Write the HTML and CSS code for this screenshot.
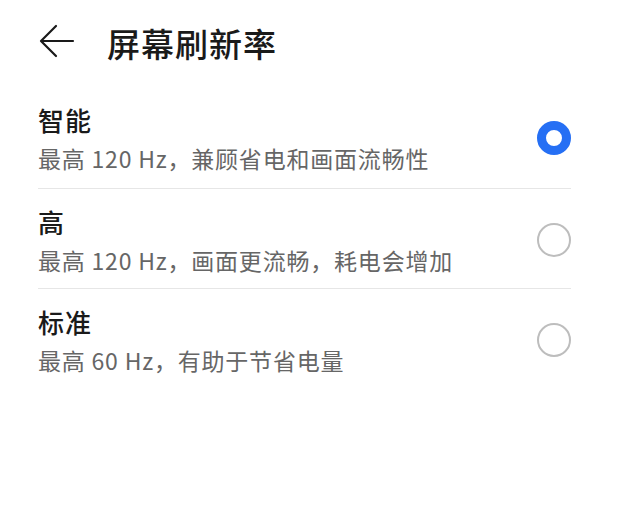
FILE: index.html
```html
<!DOCTYPE html>
<html lang="zh-CN">
<head>
<meta charset="utf-8">
<link rel="stylesheet" href="styles.css">
</head>
<body>
<div class="page">
  <header class="header">
    <span class="back">
      <svg width="36" height="34" viewBox="0 0 36 34" fill="none" stroke="#1a1a1a" stroke-width="2.2" stroke-linecap="round" stroke-linejoin="round">
        <path d="M34 17H3"/>
        <path d="M17 2L2 17L17 32"/>
      </svg>
    </span>
    <h1 class="title">屏幕刷新率</h1>
  </header>
  <ul class="list">
    <li class="item">
      <div class="texts">
        <div class="name">智能</div>
        <div class="desc">最高 120 Hz，兼顾省电和画面流畅性</div>
      </div>
      <span class="radio checked"></span>
    </li>
    <li class="item">
      <div class="texts">
        <div class="name">高</div>
        <div class="desc">最高 120 Hz，画面更流畅，耗电会增加</div>
      </div>
      <span class="radio"></span>
    </li>
    <li class="item last">
      <div class="texts">
        <div class="name">标准</div>
        <div class="desc">最高 60 Hz，有助于节省电量</div>
      </div>
      <span class="radio"></span>
    </li>
  </ul>
</div>
</body>
</html>
```
FILE: styles.css
```css
* { box-sizing: border-box; }
html, body { margin: 0; padding: 0; background: #fff; }
body {
  font-family: "Noto Sans CJK SC", "Noto Sans", sans-serif;
  color: #1a1a1a;
  width: 641px;
  height: 506px;
  overflow: hidden;
}
.header {
  display: flex;
  align-items: center;
  height: 86px;
  padding-left: 39px;
}
.back { display: flex; width: 36px; height: 34px; margin-bottom: 4px; }
.title {
  margin: 0 0 0 32px;
  font-size: 33px;
  font-weight: 500;
  letter-spacing: 1px;
  line-height: 40px;
  color: #1a1a1a;
}
.list {
  list-style: none;
  margin: 0;
  padding: 0 70px 0 38px;
}
.item {
  display: flex;
  align-items: center;
  justify-content: space-between;
  height: 100px;
  border-bottom: 1px solid #e6e6e6;
  padding-top: 2px;
}
.item:first-child { height: 103px; }
.item.last { border-bottom: none; }
.texts { display: flex; flex-direction: column; gap: 6px; }
.name {
  font-size: 26px;
  line-height: 34px;
  font-weight: 500;
  letter-spacing: 1px;
  color: #1a1a1a;
}
.desc {
  font-size: 23px;
  line-height: 30px;
  letter-spacing: 0.8px;
  color: #666;
}
.radio {
  width: 34px;
  height: 34px;
  border-radius: 50%;
  border: 2px solid #bdbdbd;
  flex: none;
}
.radio.checked {
  border: 9px solid #256ff4;
}
```
